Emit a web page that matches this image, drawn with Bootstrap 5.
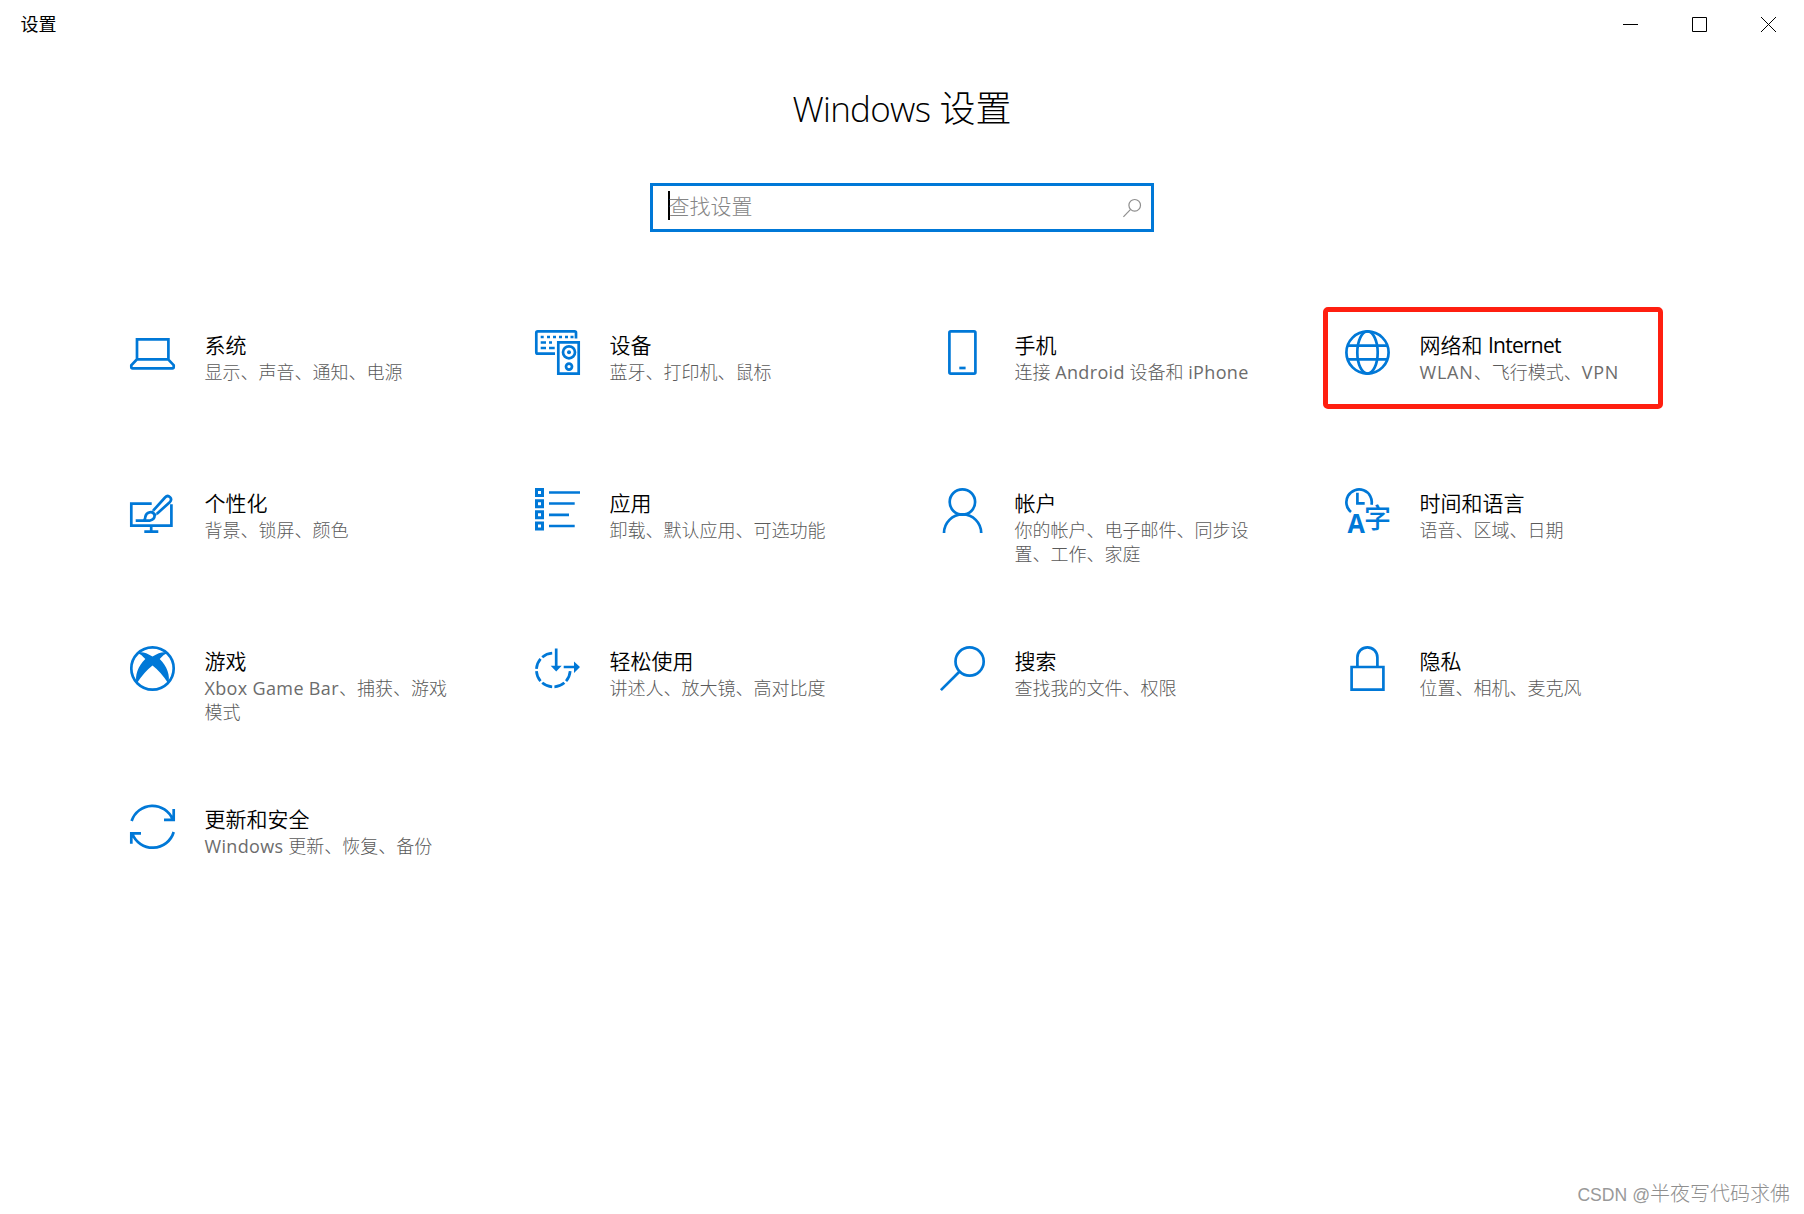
<!DOCTYPE html>
<html lang="zh-CN">
<head>
<meta charset="utf-8">
<meta name="viewport" content="width=device-width, initial-scale=1">
<title>设置</title>
<link href="https://cdn.jsdelivr.net/npm/bootstrap@5.3.0/dist/css/bootstrap.min.css" rel="stylesheet">
<style>
:root { --accent: #0078d7; }
body { font-family: "Open Sans", "Noto Sans CJK SC", sans-serif; color: #000; background: #fff; height: 1214px; overflow: hidden; }
.titlebar { height: 48px; padding-left: 20.5px; }
.titlebar .app-name { font-size: 18px; line-height: 48px; }
.win-btn { width: 69px; height: 48px; padding: 0; border: 0; background: none; }
.page-title { font-size: 36px; font-weight: 300; line-height: 50px; margin: 36px 0 0; white-space: nowrap; }
.page-title .latin { font-size: 35px; font-weight: 300; letter-spacing: -.7px; }
.search-box { width: 504px; height: 49px; border: 3px solid var(--accent); margin-top: 49px; padding: 0 9px 0 15px; }
.caret-bar { width: 2px; height: 29px; background: #000; margin-bottom: 4px; }
.hint { font-size: 21px; line-height: 43px; color: #858585; font-weight: 300; margin: -2px 0 0 -1.5px; }
.tiles { width: 1620px; margin: 98px 0 0 130px; }
.tile { width: 405px; height: 158px; gap: 29.5px; position: relative; }
.tile-icon { width: 45px; height: 45px; flex: none; overflow: visible; fill: none; stroke: var(--accent); stroke-width: 2.7; }
.tile-icon .solid { fill: var(--accent); stroke: none; }
.tile-name { font-size: 21px; font-weight: 350; line-height: 30px; white-space: nowrap; }
.tile-note { font-size: 18px; font-weight: 300; line-height: 24px; color: #5a5a5a; white-space: nowrap; }
.highlight::before { content: ""; position: absolute; left: -22px; top: -23px; width: 340px; height: 102px; border: 5px solid #ff1f10; border-radius: 5px; }
.tile-name .latin { font-weight: 400; letter-spacing: -.75px; }
.tile-note .latin { font-weight: 400; letter-spacing: .35px; color: #6c6c6c; }
.tile-note .latin-caps { letter-spacing: .8px; }
.watermark { font: 300 20px/28px "Liberation Sans", "Noto Sans CJK SC", sans-serif; color: #8f8f8f; padding-right: 14px; padding-bottom: 5px; }
.watermark .site { font-size: 17.6px; color: #999; }
</style>
</head>
<body class="d-flex flex-column">
<header class="titlebar d-flex justify-content-between flex-shrink-0">
  <span class="app-name">设置</span>
  <div class="d-flex">
    <button class="win-btn" aria-label="最小化"><svg class="d-block" width="69" height="48" stroke="#000"><path d="M26 24.5h15"/></svg></button>
    <button class="win-btn" aria-label="最大化"><svg class="d-block" width="69" height="48" fill="none" stroke="#000"><path d="M26.5 17.5h14v14h-14z"/></svg></button>
    <button class="win-btn" aria-label="关闭"><svg class="d-block" width="69" height="48" stroke="#000"><path d="M26 17l15 15M41 17L26 32"/></svg></button>
  </div>
</header>
<main class="d-flex flex-column flex-grow-1">
  <h1 class="page-title text-center"><span class="latin">Windows</span> 设置</h1>
  <div class="search-box d-flex align-items-center align-self-center">
    <span class="caret-bar"></span><span class="hint">查找设置</span>
    <svg class="ms-auto" width="20" height="20" fill="none" stroke="#8e8e8e" stroke-width="1.2"><circle cx="12.7" cy="7.3" r="5.8"/><path d="M8.6 11.4L1.4 18.8"/></svg>
  </div>
  <div class="tiles d-flex flex-wrap">
    <div class="tile d-flex">
      <svg class="tile-icon" viewBox="0 0 45 45"><path d="M7 29.3V9.3H38.4V29.3ZM7 29.3L1.3 35.2V37Q1.3 38.3 2.6 38.3H42.4Q43.7 38.3 43.7 37V35.2L38.2 29.3"/></svg>
      <div><div class="tile-name">系统</div><div class="tile-note">显示、声音、通知、电源</div></div>
    </div>
    <div class="tile d-flex">
      <svg class="tile-icon" viewBox="0 0 45 45"><path d="M41 8.5V2.8Q41 1.3 39.5 1.3H2.8Q1.3 1.3 1.3 2.8V22.2Q1.3 23.7 2.8 23.7H20M23.3 12.3H43.7V43.7H23.3Z"/><path d="M5.7 7h3M12 7h3M18 7h3M24 7h3M30 7h3M35.5 7h3M5.7 12.5H11M14 12.5H17M5.7 18H11M14 18H19.7"/><circle cx="34" cy="22.3" r="6"/><circle class="solid" cx="34" cy="22.3" r="2"/><circle cx="34" cy="36.6" r="3"/></svg>
      <div><div class="tile-name">设备</div><div class="tile-note">蓝牙、打印机、鼠标</div></div>
    </div>
    <div class="tile d-flex">
      <svg class="tile-icon" viewBox="0 0 45 45"><rect x="9.4" y="1.4" width="26" height="42.2" rx="1.4"/><path d="M19.3 38h6.3"/></svg>
      <div><div class="tile-name">手机</div><div class="tile-note">连接 <span class="latin">Android</span> 设备和 <span class="latin">iPhone</span></div></div>
    </div>
    <div class="tile highlight d-flex">
      <svg class="tile-icon" viewBox="0 0 45 45"><circle cx="22.5" cy="22.5" r="21.1"/><ellipse cx="22.5" cy="22.5" rx="10.2" ry="21.1"/><path d="M2.4 15.7H42.6M2.4 29.3H42.6"/></svg>
      <div><div class="tile-name">网络和 <span class="latin">Internet</span></div><div class="tile-note"><span class="latin latin-caps">WLAN</span>、飞行模式、<span class="latin latin-caps">VPN</span></div></div>
    </div>

    <div class="tile d-flex">
      <svg class="tile-icon" viewBox="0 0 45 45"><path d="M21.7 15.6H1.3V37.7H41.4V16.3M21.2 38V43.7M14.3 43.7H28.3"/><path d="M23.2 22.6L35 9.5Q37.6 6.8 40 9.1Q42.3 11.5 39.7 14.2L26.7 26M21.5 23.2L26 27.8M5.7 32.7H19.5Q24.8 31.5 24.6 27.5Q23.5 23.6 19.7 24.3Q15.8 25.3 15.3 29Q15.4 31.5 13.5 32.6"/></svg>
      <div><div class="tile-name">个性化</div><div class="tile-note">背景、锁屏、颜色</div></div>
    </div>
    <div class="tile d-flex">
      <svg class="tile-icon" viewBox="0 0 45 45"><path stroke-width="3" d="M1.5 1.5h6v6h-6zM1.5 12.7h6v6h-6zM1.5 23.8h6v6h-6zM1.5 35h6v6h-6z"/><path d="M14 4.5H45M14 15.5H39.7M14 26.8H34M14 38H39.7"/></svg>
      <div><div class="tile-name">应用</div><div class="tile-note">卸载、默认应用、可选功能</div></div>
    </div>
    <div class="tile d-flex">
      <svg class="tile-icon" viewBox="0 0 45 45"><circle cx="22.4" cy="14" r="12.7"/><path d="M4 45A18.4 18.4 0 0 1 41.2 45"/></svg>
      <div><div class="tile-name">帐户</div><div class="tile-note">你的帐户、电子邮件、同步设<br>置、工作、家庭</div></div>
    </div>
    <div class="tile d-flex">
      <svg class="tile-icon" viewBox="0 0 45 45"><path d="M6 24A12.7 12.7 0 1 1 26.5 16.8M12.4 4.8V15.4H19.7"/><text class="solid" x="2.4" y="44.8" font-family="Open Sans" font-weight="700" font-size="27" textLength="17.4" lengthAdjust="spacingAndGlyphs">A</text><text class="solid" x="19" y="39.8" font-family="Noto Sans CJK SC" font-weight="500" font-size="27">字</text></svg>
      <div><div class="tile-name">时间和语言</div><div class="tile-note">语音、区域、日期</div></div>
    </div>

    <div class="tile d-flex">
      <svg class="tile-icon" viewBox="0 0 45 45"><circle cx="22.5" cy="22.5" r="21.2"/><path class="solid" d="M7.5 7Q13 4.6 22.5 10.6Q32 4.6 37.5 7Q33.5 8.2 29.7 13C37 20 40.5 30 38.3 37.5Q31 26 22.5 19.5Q14 26 6.7 37.5C4.5 30 8 20 15.3 13Q11.5 8.2 7.5 7Z"/></svg>
      <div><div class="tile-name">游戏</div><div class="tile-note"><span class="latin">Xbox Game Bar</span>、捕获、游戏<br>模式</div></div>
    </div>
    <div class="tile d-flex">
      <svg class="tile-icon" viewBox="0 0 45 45"><path pathLength="270" stroke-dasharray="37 8" stroke-dashoffset="-4" d="M35.2 24A16.9 16.9 0 1 1 18.3 7.1"/><path d="M21.2 2.5V22M28.7 21H41"/><path class="solid" d="M15.7 19.7L21.2 25.5L26.7 19.7ZM39 15.5L45 21L39 27Z"/></svg>
      <div><div class="tile-name">轻松使用</div><div class="tile-note">讲述人、放大镜、高对比度</div></div>
    </div>
    <div class="tile d-flex">
      <svg class="tile-icon" viewBox="0 0 45 45"><circle cx="29.6" cy="15.5" r="14.1"/><path d="M19.6 25.5L.9 44.1"/></svg>
      <div><div class="tile-name">搜索</div><div class="tile-note">查找我的文件、权限</div></div>
    </div>
    <div class="tile d-flex">
      <svg class="tile-icon" viewBox="0 0 45 45"><path d="M6.6 21H38.4V43.7H6.6ZM12.4 21V11.4A10 10 0 0 1 32.4 11.4V21"/></svg>
      <div><div class="tile-name">隐私</div><div class="tile-note">位置、相机、麦克风</div></div>
    </div>

    <div class="tile d-flex">
      <svg class="tile-icon" viewBox="0 0 45 45"><path d="M1.6 17A21.9 21.9 0 0 1 42.8 15.7M43.7 5V15.8H34M43.7 28A21.9 21.9 0 0 1 2.2 29.5M1.3 39.7V29.3H11"/></svg>
      <div><div class="tile-name">更新和安全</div><div class="tile-note"><span class="latin">Windows</span> 更新、恢复、备份</div></div>
    </div>
  </div>
</main>
<footer class="watermark text-end"><span class="site">CSDN @</span>半夜写代码求佛</footer>
<script src="https://cdn.jsdelivr.net/npm/bootstrap@5.3.0/dist/js/bootstrap.bundle.min.js"></script>
</body>
</html>
